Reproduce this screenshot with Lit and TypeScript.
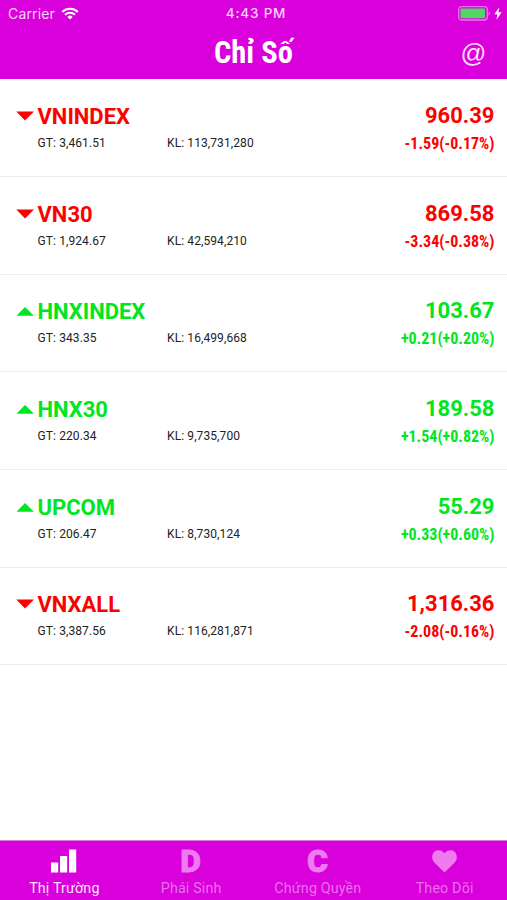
import { LitElement, html, css, svg } from "lit";
import { customElement, property } from "lit/decorators.js";
import { classMap } from "lit/directives/class-map.js";

interface MarketIndex {
  name: string;
  gt: string;
  kl: string;
  value: string;
  change: string;
  up: boolean;
}

const INDICES: MarketIndex[] = [
  { name: "VNINDEX", gt: "3,461.51", kl: "113,731,280", value: "960.39", change: "-1.59(-0.17%)", up: false },
  { name: "VN30", gt: "1,924.67", kl: "42,594,210", value: "869.58", change: "-3.34(-0.38%)", up: false },
  { name: "HNXINDEX", gt: "343.35", kl: "16,499,668", value: "103.67", change: "+0.21(+0.20%)", up: true },
  { name: "HNX30", gt: "220.34", kl: "9,735,700", value: "189.58", change: "+1.54(+0.82%)", up: true },
  { name: "UPCOM", gt: "206.47", kl: "8,730,124", value: "55.29", change: "+0.33(+0.60%)", up: true },
  { name: "VNXALL", gt: "3,387.56", kl: "116,281,871", value: "1,316.36", change: "-2.08(-0.16%)", up: false },
];

@customElement("status-bar")
export class StatusBar extends LitElement {
  static styles = css`
    :host {
      display: grid;
      grid-template-columns: 1fr auto 1fr;
      align-items: center;
      height: 27px;
      padding: 0 5px 0 8px;
      font: 400 14px/27px Inter, sans-serif;
      color: #fbd3fb;
    }
    .left, .right { display: flex; align-items: center; }
    .left { gap: 6.5px; }
    .right { justify-content: flex-end; gap: 4px; }
    .carrier { letter-spacing: 0.15px; }
    .time { font-weight: 500; font-size: 13.5px; letter-spacing: 0.8px; padding-left: 2px; }
    svg { display: block; }
  `;
  render() {
    return html`
      <div class="left">
        <span class="carrier">Carrier</span>
        <svg width="18" height="13" viewBox="0 0 18 13" fill="none" stroke="#fff" stroke-width="2.1">
          <path d="M1.2 4.9A11.2 11.2 0 0 1 16.8 4.9" />
          <path d="M4 7.8A7.2 7.2 0 0 1 14 7.8" />
          <path d="M9 12.6L6.3 9.9A3.9 3.9 0 0 1 11.7 9.9Z" fill="#fff" stroke="none" />
        </svg>
      </div>
      <span class="time">4:43 PM</span>
      <div class="right">
        <svg width="32" height="15" viewBox="0 0 32 15">
          <rect x="0.7" y="0.7" width="28.6" height="13.3" rx="3" fill="none" stroke="#ed70ef" stroke-width="1.3" />
          <rect x="2.5" y="2.5" width="24.5" height="9.7" rx="1" fill="#4fd964" />
          <path d="M30.6 5.2Q32 6 32 7.4T30.6 9.6Z" fill="#ed70ef" />
        </svg>
        <svg width="8" height="13" viewBox="0 0 8 13">
          <path d="M5.3 0.3L0.3 7.3H3.4L2.5 12.7L7.7 5.3H4.5Z" fill="#fff" />
        </svg>
      </div>
    `;
  }
}

@customElement("index-row")
export class IndexRow extends LitElement {
  @property({ attribute: false }) item!: MarketIndex;
  static styles = css`
    :host { display: block; height: 97.67px; box-sizing: border-box; border-bottom: 1px solid #ededed; }
    .row { display: flex; justify-content: space-between; padding: 23.5px 12.5px 0 16px; color: #fd0000; }
    .up { color: #00e620; }
    .title { display: flex; align-items: center; gap: 3.5px; height: 28px; }
    .title svg { margin-top: -2px; }
    .name { font-size: 22px; font-weight: 700; line-height: 28px; }
    .figures {
      display: grid;
      grid-template-columns: 129.5px auto;
      padding-left: 21.5px;
      margin-top: 3px;
      font-size: 12px;
      line-height: 18px;
      letter-spacing: 0.1px;
      color: #222;
    }
    .quote { display: flex; flex-direction: column; align-items: flex-end; }
    .value { font-size: 22px; font-weight: 700; line-height: 26px; }
    .change {
      margin-top: 5px;
      font-family: "Roboto Condensed", Roboto, sans-serif;
      font-stretch: 75%;
      font-size: 16px;
      font-weight: 700;
      line-height: 20px;
    }
  `;
  render() {
    const i = this.item;
    return html`
      <div class=${classMap({ row: true, up: i.up })}>
        <div>
          <div class="title">
            <svg width="18" height="10" viewBox="0 0 18 10" fill="currentColor">
              <path d=${i.up ? "M0.5 9.8L9 1.1L17.9 9.8Z" : "M0.3 0.5L18 0.5L9 9.5Z"} />
            </svg>
            <span class="name">${i.name}</span>
          </div>
          <div class="figures"><span>GT: ${i.gt}</span><span>KL: ${i.kl}</span></div>
        </div>
        <div class="quote">
          <span class="value">${i.value}</span>
          <span class="change">${i.change}</span>
        </div>
      </div>
    `;
  }
}

@customElement("tab-bar")
export class TabBar extends LitElement {
  static styles = css`
    :host {
      display: grid;
      grid-template-columns: repeat(4, 1fr);
      height: 60px;
      box-sizing: border-box;
      border-top: 1px solid #d678d8;
      background: #d900dc;
    }
    .tab { display: flex; flex-direction: column; align-items: center; color: #ee7bf0; }
    .active { color: #fff; }
    .icon { display: flex; align-items: center; justify-content: center; height: 26px; margin-top: 7px; padding-left: 1px; }
    .active .icon { padding-left: 2px; }
    .letter { font: 900 32px/26px Roboto, sans-serif; -webkit-text-stroke: 0.8px currentColor; }
    .label { font-size: 14.3px; line-height: 18px; margin-top: 4.5px; padding-left: 2px; letter-spacing: 0.15px; opacity: 0.9; }
  `;
  render() {
    const bars = html`<svg width="26" height="24" viewBox="0 0 26 24" fill="currentColor">
      ${svg`<path d="M0 13.5H7.2V23.5H0ZM9 7H16.2V23.5H9ZM18 0.5H25.2V23.5H18Z" />`}
    </svg>`;
    const heart = html`<svg width="25" height="23" viewBox="0 0 25 23" fill="currentColor">
      <path d="M12.5 22.5L2.3 12.4C-0.7 9.4-0.4 4.3 2.5 1.8C5.3-0.6 9.4 0 11.7 2.5L12.5 3.4L13.3 2.5C15.6 0 19.7-0.6 22.5 1.8C25.4 4.3 25.7 9.4 22.7 12.4Z" />
    </svg>`;
    const tabs = [
      { icon: bars, label: "Thị Trường" },
      { icon: html`<span class="letter">D</span>`, label: "Phái Sinh" },
      { icon: html`<span class="letter">C</span>`, label: "Chứng Quyền" },
      { icon: heart, label: "Theo Dõi" },
    ];
    return tabs.map(
      (t, n) => html`<div class=${classMap({ tab: true, active: n === 0 })}>
        <div class="icon">${t.icon}</div>
        <span class="label">${t.label}</span>
      </div>`
    );
  }
}

@customElement("app-root")
export class AppRoot extends LitElement {
  static styles = css`
    :host {
      display: flex;
      flex-direction: column;
      height: 900px;
      background: #fff;
      font-family: Roboto, sans-serif;
    }
    header { height: 79px; background: #d900dc; color: #fff; }
    .nav { display: grid; grid-template-columns: 1fr auto 1fr; height: 52px; align-items: center; }
    .nav h1 {
      grid-column: 2;
      margin: 0;
      font-family: "Roboto Condensed", Roboto, sans-serif;
      font-stretch: 75%;
      font-size: 30.5px;
      font-weight: 700;
      line-height: 50px;
    }
    .at { justify-self: end; margin-right: 20.5px; font: 400 25.5px/50px "Liberation Sans", sans-serif; color: #fde0fd; }
    main { flex: 1; padding-top: 0.5px; }
  `;
  render() {
    return html`
      <header>
        <status-bar></status-bar>
        <div class="nav"><h1>Chỉ Số</h1><span class="at">@</span></div>
      </header>
      <main>${INDICES.map((i) => html`<index-row .item=${i}></index-row>`)}</main>
      <tab-bar></tab-bar>
    `;
  }
}
